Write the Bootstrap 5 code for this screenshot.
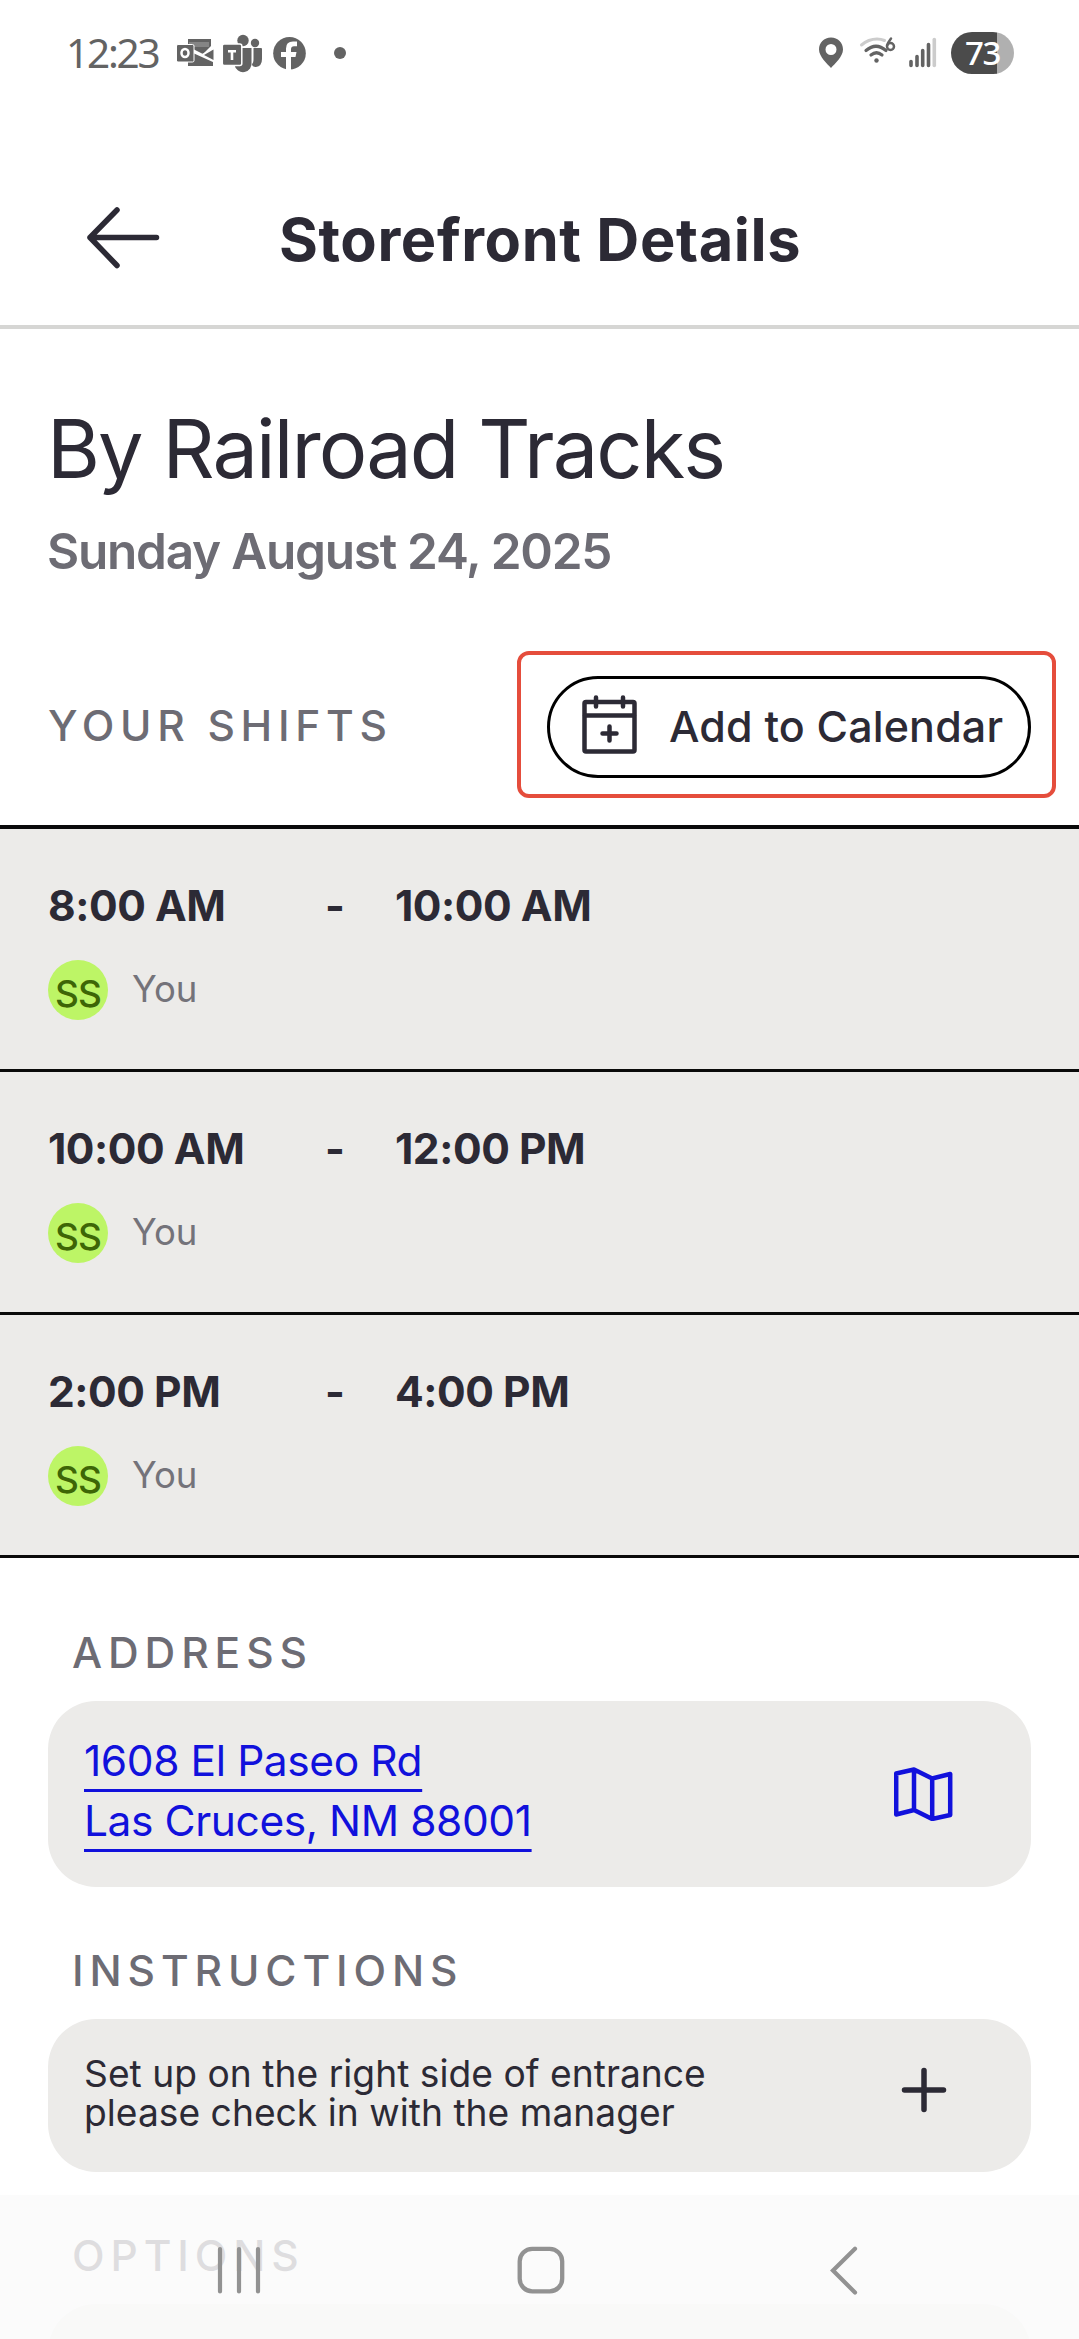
<!doctype html>
<html lang="en">
<head>
<meta charset="utf-8">
<meta name="viewport" content="width=device-width, initial-scale=1">
<title>Storefront Details</title>
<link href="https://cdn.jsdelivr.net/npm/bootstrap@5.3.0/dist/css/bootstrap.min.css" rel="stylesheet">
<style>
  :root { --ink: #2c2a35; --muted: #6d6c74; --panel: #ecebe9; --link: #1111dc; }
  body { font-family: Inter, "Open Sans", sans-serif; color: var(--ink); background: #fff; }
  svg { display: block; flex: none; }
  .status-bar { height: 106px; padding: 0 65px 0 66px; color: #636363; font-family: "Noto Sans", sans-serif; }
  .clock { font-size: 40.5px; font-weight: 400; letter-spacing: -2.2px; line-height: 1; width: 111px; }
  .battery { width: 63px; height: 42px; border-radius: 21px; background: linear-gradient(90deg, #4b4b4b 73%, #b0b0b0 73%); color: #fff; font-size: 33px; letter-spacing: -1.5px; line-height: 42px; font-weight: 500; }
  .app-header { height: 223px; padding: 48px 0 0 86px; border-bottom: 4px solid #d6d6d4; }
  .page-title { font-size: 59.5px; font-weight: 650; letter-spacing: .6px; line-height: 70px; margin: 0 0 2px 119px; }
  .scroll-area { height: 2010px; overflow: hidden; }
  .store-name { font-size: 81px; line-height: 100px; letter-spacing: -1.9px; font-weight: 400; margin: 70px 0 0 47px; }
  .store-date { font-size: 49.5px; line-height: 60px; letter-spacing: -1.25px; font-weight: 600; color: var(--muted); margin: 22px 0 0 47px; }
  .shift-head { margin: 70px 23px 27px 48px; height: 147px; }
  .label-caps { font-size: 42.5px; line-height: 50px; letter-spacing: 5.9px; font-weight: 550; color: var(--muted); margin: 0; }
  .shift-head .label-caps { letter-spacing: 5.7px; padding-top: 3px; }
  .section-label { padding-left: 72px; }
  .callout-frame { width: 539px; height: 147px; border: 4px solid #e54d3c; border-radius: 12px; padding: 20.5px 21px 0 26px; }
  .btn-calendar { width: 484px; height: 102px; border: 3px solid #000; border-radius: 51px; padding: 0 0 2px 31px; gap: 32px; font-size: 43px; line-height: 50px; font-weight: 500; letter-spacing: .15px; color: var(--ink); }
  .btn-calendar svg { margin-bottom: 1px; }
  .shift-list { border-top: 4px solid #0a0a0a; }
  .shift-list .shift { height: 243px; border: 0; border-bottom: 3px solid #0a0a0a; background: var(--panel); padding: 52px 48px 0; color: var(--ink); }
  .shift-time { font-size: 42.5px; line-height: 50px; font-weight: 650; letter-spacing: -.45px; }
  .t-start { width: 277px; }
  .t-dash { width: 70px; }
  .person { margin-top: 29px; gap: 24px; font-size: 36.5px; color: #74737a; }
  .avatar { width: 60px; height: 60px; background: #bdf566; color: #3d6606; font-size: 37px; font-weight: 500; letter-spacing: -.9px; line-height: 45px; padding-top: 11px; }
  .person-name { line-height: 58px; height: 60px; }
  .panel { background: var(--panel); border-radius: 48px; margin: 23px 48px 0; padding-left: 36px; }
  .address-panel { height: 186px; padding-right: 78px; }
  .address { font-size: 42.5px; line-height: 60px; letter-spacing: -.42px; margin-bottom: 7px; color: var(--link); text-decoration: underline; text-decoration-thickness: 3px; text-underline-offset: 13px; text-decoration-skip-ink: none; }
  .note-panel { height: 153px; padding-right: 84px; }
  .options-panel { background: #f2f2f1; }
  .note { font-size: 37.2px; line-height: 39px; letter-spacing: .02px; margin-bottom: 5px; }
  .section-address { margin-top: 70px; }
  .section-next { margin-top: 59px; }
  .sys-nav { height: 144px; background: rgba(250,250,250,.8); padding: 51px 221px 0 216px; }
  .home-key { margin-right: 11px; }
</style>
</head>
<body>
<header>
  <div class="status-bar d-flex align-items-center justify-content-between">
    <div class="d-flex align-items-center">
      <span class="clock">12:23</span>
      <svg width="172" height="42" viewBox="177 33 172 42" fill="#636363">
        <path d="M188 40h23v7l-8 8 10 5v7h-25z"/>
        <path d="M189 43h20v5h-20z" fill="#858585"/>
        <path d="M193 50l21 10.500v3L193 54zM200.500 56l13-7.500V63z" fill="#fff"/>
        <path d="M204 56l9.500-5.500v10.500z"/>
        <rect x="176.500" y="45.500" width="17.500" height="17.500" rx="1.500" stroke="#fff"/>
        <ellipse cx="185" cy="54" rx="3.500" ry="4" fill="none" stroke="#fff" stroke-width="2.500"/>
        <circle cx="243" cy="41.500" r="5.700"/><circle cx="255" cy="44" r="4.200"/>
        <path d="M253.500 49H261q1 0 1 1v10q0 7-6 8-4 0-4-3 1.500-1 1.500-5z"/>
        <path d="M236 49h15.500v14a8.500 8.500 0 0 1-17 3z"/>
        <rect x="222.300" y="45" width="19.500" height="21.500" rx="2" stroke="#fff" stroke-width="1.500"/>
        <path d="M228 51h8v2.600h-2.700V61h-2.600v-7.400H228z" fill="#fff"/>
        <circle cx="289.500" cy="54.200" r="16.300"/>
        <path d="M286 71V58h-5v-5h5v-3.500q0-7 7-7h4v4.700h-3q-3 0-3 3V53h5.500l-1 5H291v13z" fill="#fff"/>
        <circle cx="340" cy="54" r="6"/>
      </svg>
    </div>
    <div class="d-flex align-items-center">
      <svg width="132" height="42" viewBox="819 33 132 42" fill="none" stroke="#636363" stroke-linecap="round">
        <path fill-rule="evenodd" fill="#636363" stroke="none" d="M831 38.500c7 0 12 5.200 12 12 0 7-8.500 14.500-12 18.500-3.500-4-12-11.500-12-18.500 0-6.800 5-12 12-12zm0 6.500a5.500 5.500 0 1 0 0 11 5.500 5.500 0 0 0 0-11z"/>
        <path d="M861.500 46q7-6 15.500-6 4 0 7.500 1.500" stroke="#ccc" stroke-width="3"/>
        <path d="M866 51.500q10-8.500 20 0M871 56q5.500-4.500 11 0" stroke-width="3.200"/>
        <circle cx="876.500" cy="61.500" r="2.200" fill="#636363" stroke="none"/>
        <circle cx="890.500" cy="47.500" r="3.500" stroke-width="2.500"/><path d="M887 46.500q1-3 4-7" stroke-width="2.500"/>
        <path d="M911 62.500v4M917 57.500v9M922.700 51.500v15M928.500 45.500v21" stroke-width="3.600"/>
        <path d="M934.300 40.500v26" stroke="#ccc" stroke-width="3.600"/>
      </svg>
      <div class="battery text-center">73</div>
    </div>
  </div>
  <div class="app-header d-flex align-items-center">
    <svg class="mb-1" width="74" height="64" viewBox="0 0 74 64" fill="none" stroke="#2c2a35" stroke-width="5.500" stroke-linecap="round" stroke-linejoin="round"><path d="M70.500 31.500H4M31 4L4 31.500 31 59.500"/></svg>
    <h1 class="page-title">Storefront Details</h1>
  </div>
</header>

<main class="scroll-area">
  <h2 class="store-name">By Railroad Tracks</h2>
  <p class="store-date">Sunday August 24, 2025</p>

  <div class="shift-head d-flex align-items-center justify-content-between">
    <h3 class="label-caps">YOUR SHIFTS</h3>
    <div class="callout-frame">
      <button type="button" class="btn btn-calendar d-flex align-items-center">
        <svg width="56" height="60" viewBox="581 695 56 60" fill="none" stroke="#2c2a35" stroke-width="4.500" stroke-linecap="round" stroke-linejoin="round">
          <rect x="584.500" y="702" width="50" height="49.500" rx="1.500"/>
          <path d="M585 715.500h49M596 697.500v9M623 697.500v9M609.500 726.500v14M602.500 733.500h14"/>
        </svg>
        <span>Add to Calendar</span>
      </button>
    </div>
  </div>

  <ul class="list-group rounded-0 shift-list">
    <li class="list-group-item shift">
      <div class="shift-time d-flex"><span class="t-start">8:00 AM</span><span class="t-dash">-</span><span>10:00 AM</span></div>
      <div class="person d-flex"><span class="avatar rounded-circle text-center">SS</span><span class="person-name">You</span></div>
    </li>
    <li class="list-group-item shift">
      <div class="shift-time d-flex"><span class="t-start">10:00 AM</span><span class="t-dash">-</span><span>12:00 PM</span></div>
      <div class="person d-flex"><span class="avatar rounded-circle text-center">SS</span><span class="person-name">You</span></div>
    </li>
    <li class="list-group-item shift">
      <div class="shift-time d-flex"><span class="t-start">2:00 PM</span><span class="t-dash">-</span><span>4:00 PM</span></div>
      <div class="person d-flex"><span class="avatar rounded-circle text-center">SS</span><span class="person-name">You</span></div>
    </li>
  </ul>

  <section class="section-address">
    <h3 class="label-caps section-label">ADDRESS</h3>
    <div class="panel address-panel d-flex align-items-center justify-content-between">
      <a class="address" href="#">1608 El Paseo Rd<br>Las Cruces, NM 88001</a>
      <svg width="59" height="54" viewBox="894 1767 59 54" fill="none" stroke="#1111dc" stroke-width="4.500" stroke-linejoin="round"><path d="M896.200 1773.500L914 1769.500l18.200 9 18-4.500v41l-18 4-18.200-9-17.800 4.500zM914 1769.500v40.500M932.200 1778.500v40.500"/></svg>
    </div>
  </section>

  <section class="section-next">
    <h3 class="label-caps section-label">INSTRUCTIONS</h3>
    <div class="panel note-panel d-flex align-items-center justify-content-between">
      <p class="note">Set up on the right side of entrance<br>please check in with the manager</p>
      <svg width="46" height="57" viewBox="0 0 46 57" stroke="#2c2a35" stroke-width="5.500" stroke-linecap="round"><path d="M23 3.500v39M3.500 23h39"/></svg>
    </div>
  </section>

  <section class="section-next">
    <h3 class="label-caps section-label">OPTIONS</h3>
    <div class="panel note-panel options-panel"></div>
  </section>
</main>

<nav class="sys-nav fixed-bottom d-flex justify-content-between align-items-start">
  <svg width="46" height="48" viewBox="0 0 46 48" stroke="#929292" stroke-width="4.200" stroke-linecap="round"><path d="M4 3v42.500M23 3v42.500M42 3v42.500"/></svg>
  <svg class="home-key" width="48" height="48" viewBox="0 0 48 48" fill="none" stroke="#929292" stroke-width="4.300"><rect x="2.700" y="2.800" width="42.500" height="42.500" rx="12.500"/></svg>
  <svg width="28" height="49" viewBox="0 0 28 49" fill="none" stroke="#929292" stroke-width="4.200" stroke-linecap="round"><path d="M25 2.800L3 24.500 25 46.500"/></svg>
</nav>
<script src="https://cdn.jsdelivr.net/npm/bootstrap@5.3.0/dist/js/bootstrap.bundle.min.js"></script>
</body>
</html>
